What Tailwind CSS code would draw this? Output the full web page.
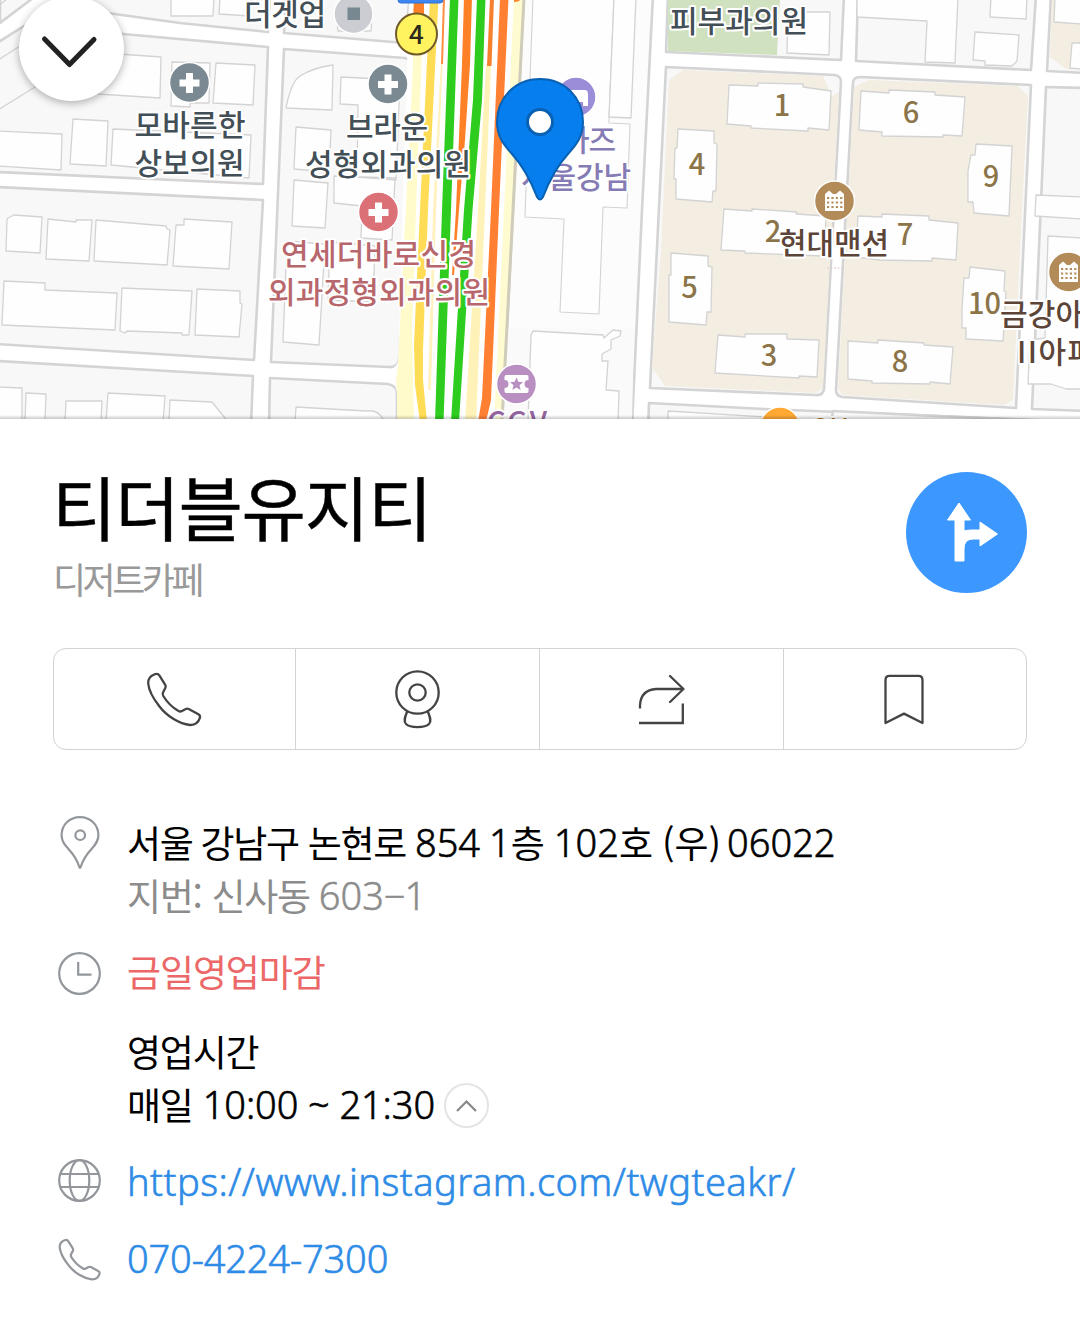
<!DOCTYPE html>
<html lang="ko">
<head>
<meta charset="utf-8">
<title>티더블유지티</title>
<script src="https://cdn.jsdelivr.net/npm/@tailwindcss/browser@4"></script>
</head>
<body class="bg-white w-[1080px] h-[1322px] overflow-hidden font-['Noto_Sans_CJK_KR',sans-serif] text-black">
<section class="relative h-[419px] overflow-hidden">
<svg class="block" width="1080" height="419" viewBox="0 0 1080 419" fill="none" stroke-linejoin="round">
  <rect width="1080" height="419" fill="#fff"/>
  <!-- city blocks -->
  <g fill="#f8f8f8" stroke="#d4d4d4" stroke-width="2.6">
    <path d="M33-2L0 23V-4Z"/>
    <path d="M50-6L100 12L180 23L268 32L270-5Z"/>
    <path d="M-3 43L24 26L60 29L123 34L268 47L263 184L-3 172Z"/>
    <path d="M-3 187L263 200L254 360L-3 344Z"/>
    <path d="M-3 361L253 376L251 425H-3Z"/>
    <path d="M286-5L284 33L405 43L410-5Z"/>
    <path d="M284 49L405 58Q413 60 413 68L399 359Q398 368 389 367L271 362Z"/>
    <path d="M270 378L388 384Q397 386 397 393V425H269Z"/>
    <path d="M524-5L502 425H632L642 210L653-5Z" fill="#fcfcfc"/>
    <path d="M668-5L666 52L841 60L844-5Z"/>
    <path d="M858-5L856 61L1031 70L1036-5Z"/>
    <path d="M1051-5L1047 71L1085 73V-5Z"/>
    <path d="M1046 87L1085 88V411L1032 409Z"/>
    <path d="M666 67L835 75Q841 76 841 82L824 389Q823 396 815 395L650 388Z"/>
    <path d="M860 77L1031 85L1016 408L842 397Q836 396 836 390L853 82Q854 77 860 77Z"/>
    <path d="M649 403L765 409L1085 422V430H648Z"/>
    <path d="M833 411L1085 423V430H830Z"/>
  </g>
  <path d="M506 328L634 329L632 419H503Z" fill="#fafafa"/>
  <path d="M668 0H780L777 55L668 51Z" fill="#d0e1c0"/>
  <path d="M683 70L823 76L832 96L839 92L823 388L815 393L665 386L652 367L661 250L669 80Z" fill="#f3ede2"/>
  <path d="M869 80L1018 86L1028 96L1021 230L1013 400L1004 405L842 395L838 388L854 87Z" fill="#f3ede2"/>
  <path d="M1052 0H1080V70L1066 69L1050 57Z" fill="#f3ede2"/>
  <!-- buildings -->
  <g fill="#fefefe" stroke="#d3d3d3" stroke-width="1.3">
    <path d="M-2 60L20 46L35 87L-2 110Z" fill="#f8f8f8"/>
    <path d="M-2 6L6 0"/>
    <path d="M171-3L171 16L213 16L214-3M220-3L219 14L250 16L252-3"/>
    <path d="M90 52L161 57L160 98L98 94ZM172 62L210 63L209 103L190 103L190 107L171 106ZM216 63L255 65L253 105L213 103Z"/>
    <path d="M73 119L108 121L106 166L70 164ZM-2 131L62 134L61 170L-2 166ZM113 129L251 135L249 178L111 165Z"/>
    <path d="M8 218L14 215L42 217L40 253L6 251L7 220ZM48 219L76 222V220L92 220L89 261L46 259ZM96 220L166 226L167 229L170 230L167 265L94 261ZM176 225L184 225V219L232 222L229 269L173 266Z"/>
    <path d="M4 281L45 283V290L117 293L115 330L2 325ZM122 288L192 291L189 335L182 335V333L127 331L125 333L120 331ZM197 289L240 291V303L242 304L239 337L195 335Z"/>
    <path d="M-2 387L22 388V422H-2ZM26 393L46 394L45 422H25ZM66 401H102L101 422H65ZM108 393L165 396L163 422H106ZM170 400L212 402L225 418V422H169Z"/>
    <path d="M333 65L332 110L286 108Q291 82 300 76Q315 67 333 65ZM341 77L400 80L396 180L357 177L358 105L340 104ZM296 127L331 130L329 172L294 169ZM294 180L328 183L325 228L292 226ZM334 176L395 178L392 240L361 238L362 206L334 203Z"/>
    <path d="M287 241L325 244L319 345L283 342ZM330 242L375 246L373 302L328 300Z"/>
    <path d="M338 31L336 11L372 13L371 31ZM296 407L366 411Q380 409 384 422H295Z"/>
    <path d="M533-3L525 217L564 219L560 312L599 314L603 207L627 208L630 124L609 123L609 118L614-3Z" stroke-width="1.1"/>
    <path d="M614-3L609 117L631 118L636-3Z"/>
    <path d="M533 331L603 335L604 338L613 330L621 331L620 336L611 340V349L602 354V361L608 361L606 390L619 391L618 422H528L531 335Z"/>
    <path d="M788 12L830 12L829 55L787 53Z"/>
    <path d="M857-3V17L927 21L925 62L955 63L958-3ZM991-3L990 17L1026 19L1027-3ZM975 32L1019 35L1017 61L1012 66L985 65V61L973 60Z"/>
    <path d="M1055-3L1054 22L1082 24V-3ZM1072 43L1070 68L1082 69V43Z"/>
    <path d="M729 85L758 86V83L803 84V87L831 91L829 130L808 128V131L751 128V126L727 124Z"/>
    <path d="M861 91L889 93V90L935 92V95L965 97L962 136L943 135V137L882 136V132L859 130Z"/>
    <path d="M678 129L714 131V143L717 144L716 191H713L712 202L676 199V179H674L675 148H677Z"/>
    <path d="M976 144L1012 146L1009 216L974 213L973 202L968 202V171L971 155H975Z"/>
    <path d="M724 209L752 211V209L797 212L796 214L826 216L824 256L745 253V251L721 250Z"/>
    <path d="M858 216L882 217V214L929 216V220L958 223L956 260L932 258V261L880 260L856 257Z"/>
    <path d="M671 253L708 256V266L712 267L711 312H707L706 325L669 322V275H671Z"/>
    <path d="M970 267L1005 271L1004 291L1006 292L1003 341L966 339V328H962V309L964 278H969Z"/>
    <path d="M718 335L745 337V334L787 334V339L819 340L817 377L799 376V378L715 373Z"/>
    <path d="M848 341L878 343V340L924 343V345L953 347L950 384L930 382V384L872 383V381L848 379Z"/>
    <path d="M1036 195L1082 197V219L1035 216ZM1048 236L1082 238V389L1066 389L1051 384L1028 384L1030 340L1045 338Z"/>
    <path d="M668 411L765 417L766 425H668Z"/>
  </g>
  <!-- main avenue -->
  <path d="M409-2L398 360Q398 367 390 369L397 392V422H502L524-2Z" fill="#fff"/>
  <path d="M413 50L422 50L416 210L412 330L414 422H397V392L396 380L398 366L413 67Z" fill="#fffbcb"/>
  <path d="M514-2H523L503 422H494Z" fill="#fffbd0"/>
  <path d="M524-2L502 422" stroke="#d0ccba" stroke-width="3"/>
  <path d="M441 60H443L436 210L431 390H428L433 210Z" fill="#fff2c0"/>
  <path d="M486 66H491L485 210L476 422H465L478 210Z" fill="#fff2b9"/>
  <path d="M430-2H438.500L428 210L423 350V380L427 422H420L415 385L414 345L420 210Z" fill="#ffdc55"/>
  <path d="M414-2H424V20H413Z" fill="#ff8127"/>
  <path d="M443-2H445L443 64H441Z" fill="#ff8d43"/>
  <path d="M464-2H472L470 64L465 140L459 210L454 275H452L456 210L462 64Z" fill="#ff8127"/>
  <path d="M490-2H494L491.500 66H487Z" fill="#f5802d"/>
  <path d="M514-2H522Q520 2 514 2Z" fill="#ff8127"/>
  <path d="M500-2H508.500L499 210L491 400L486 422H478L482 398L491 210Z" fill="#ff8033"/>
  <path d="M450-2H458.500L451 210L443.500 422H435L442 210Z" fill="#2ecc1f"/>
  <path d="M477-2H485.500L482 100L472.500 210L459 422H451L464 210L473 100Z" fill="#2ecc1f"/>
  <rect x="398" y="-5" width="45" height="8" rx="3" fill="#3f86f0" stroke="#2f72d2"/>
  <circle cx="416.500" cy="34" r="20.500" fill="#fff460" stroke="#705b2b" stroke-width="2"/>
  <!-- place markers -->
  <g stroke="#fff" stroke-width="1.500">
    <circle cx="189.500" cy="82.500" r="20" fill="#7b8a92"/>
    <circle cx="388" cy="84" r="20" fill="#7b8a92"/>
    <circle cx="378.500" cy="212" r="20" fill="#dc7077"/>
    <circle cx="353.500" cy="14" r="19.500" fill="#cbcdd2"/>
    <circle cx="576" cy="97" r="20" fill="#9c8dd8"/>
    <circle cx="516.500" cy="384" r="20" fill="#b98fc1"/>
    <circle cx="834.500" cy="201" r="20" fill="#b28b58"/>
    <circle cx="1068.500" cy="272" r="20" fill="#b28b58"/>
    <circle cx="780" cy="427" r="20" fill="#ffa834"/>
  </g>
  <path fill="#fff" d="M186 73h7v6.500h6.500v7H193V93h-7v-6.500h-6.500v-7H186ZM384.500 74.500h7v6.500h6.500v7h-6.500v6.500h-7V88H378v-7h6.500ZM375 202.500h7v6.500h6.500v7H382v6.500h-7V216h-6.500v-7h6.500Z"/>
  <rect x="347.500" y="7.500" width="12.500" height="12.500" fill="#778891"/>
  <path d="M566 92Q566 90 568 90H586Q588 91 588 94V106H583V102H566Z" fill="#fff"/>
  <path d="M506 375h21q1.500 0 1.500 2v3a4 4 0 0 0 0 8v3q0 2-1.500 2h-21q-1.500 0-1.500-2v-3a4 4 0 0 0 0-8v-3q0-2 1.500-2Z" fill="#fff"/>
  <path d="M516.500 377.500l1.900 4.300 4.600.5-3.500 3 1.100 4.600-4.100-2.500-4.100 2.500 1.100-4.600-3.500-3 4.600-.5Z" fill="#b98fc1"/>
  <g id="apartment">
    <path d="M825 194l4-3.500 4 3.500h3l4-3.500 4 3.500v17h-19Z" fill="#fff"/>
    <path d="M827 198h16M827 202.500h16M827 207h16" stroke="#b28b58" stroke-width="2.200" stroke-dasharray="2.200 2.200"/>
  </g>
  <use href="#apartment" x="234" y="71"/>
  <!-- map labels -->
  <g font-family="'Noto Sans CJK KR', sans-serif" font-weight="500" font-size="30" stroke="#fff" stroke-width="4" paint-order="stroke" fill="#434f56">
    <text x="244" y="24.500" textLength="82">더겟업</text>
    <text x="134.500" y="135.500" textLength="111">모바른한</text>
    <text x="134.500" y="173.500" textLength="110">상보의원</text>
    <text x="346" y="137.500" textLength="82">브라운</text>
    <text x="305" y="175" textLength="166">성형외과의원</text>
    <text x="670" y="32" textLength="138">피부과의원</text>
    <g fill="#b7666c">
      <text x="281" y="265" textLength="195">연세더바로신경</text>
      <text x="268" y="303" textLength="222">외과정형외과의원</text>
    </g>
    <g fill="#857bb5">
      <text x="562" y="151" textLength="54">아즈</text>
      <text x="521" y="188" textLength="110">서울강남</text>
    </g>
    <text x="487" y="433" fill="#94649f" font-size="29" textLength="60">CGV</text>
    <text x="810" y="438" fill="#b5722b" font-size="27" textLength="39">CU</text>
    <g fill="#8b7448" text-anchor="middle" font-size="29" stroke-width="3">
      <text x="782" y="116">1</text><text x="911" y="122.500">6</text><text x="697" y="175">4</text><text x="991" y="186.500">9</text>
      <text x="773" y="242">2</text><text x="905" y="244.500">7</text><text x="689.500" y="298">5</text><text x="984.500" y="314">10</text>
      <text x="769" y="366">3</text><text x="900" y="372">8</text>
    </g>
    <g fill="#5c4538">
      <text x="779" y="253.500" textLength="110">현대맨션</text>
      <text x="1000" y="325" textLength="111">금강아파</text>
      <text x="1017" y="363" textLength="78">II아파</text>
    </g>
    <text x="416.500" y="43.500" text-anchor="middle" font-size="26" fill="#2c291c" stroke="none">4</text>
  </g>
  <path d="M827 268H842" stroke="#e1c9c4" stroke-dasharray="2 1.500"/>
  <!-- selected place pin -->
  <path d="M540 79C515 79 497 98 497 122C497 136 503 144 512 154C524 167 532 184 537 197Q540 202 543 197C548 184 556 167 568 154C577 144 583 136 583 122C583 98 565 79 540 79Z" fill="#067eed" stroke="#0961b4" stroke-width="2"/>
  <circle cx="540" cy="122" r="12.500" fill="#fff" stroke="#0961b4" stroke-width="3"/>
</svg>
<button class="absolute left-[19px] top-[-4px] size-[105px] rounded-full bg-white shadow-[0_2px_9px_rgba(0,0,0,0.32)]" aria-label="닫기">
  <svg width="105" height="105" fill="none" stroke="#222" stroke-width="5" stroke-linecap="round" stroke-linejoin="round"><path d="M25.500 43L50.500 68.500L75 43.500"/></svg>
</button>
<div class="absolute inset-x-0 bottom-0 h-[4px] bg-linear-to-b from-black/0 to-black/20"></div>
</section>

<main class="px-[53px]">
  <header class="flex h-[174px] justify-between pt-[53px]">
    <div>
      <h1 class="-mt-[18px] h-[104px] text-[70px] leading-[104px] tracking-[-1.200px] -ml-[1px] whitespace-nowrap [-webkit-text-stroke:0.4px]">티더블유지티</h1>
      <p class="-mt-[5px] h-[50px] text-[36px] leading-[50px] tracking-[-3.5px] text-[#999] whitespace-nowrap">디저트카페</p>
    </div>
    <button class="size-[121px] rounded-full bg-[#3c98ff]" aria-label="길찾기">
      <svg width="121" height="121" fill="#fff" stroke="#fff" stroke-linejoin="round"><path d="M53 31L64.500 48H58V59Q61 58 66 58H74V50L91.500 62L74 74V67H67Q58 67 58 77V89H49V48H41.500Z"/></svg>
    </button>
  </header>

  <nav class="mt-[55px] flex h-[102px] rounded-[13px] border border-[#d3d3d3] divide-x divide-[#d3d3d3] text-[#444]">
    <button class="w-[242px] shrink-0 flex items-center justify-center" aria-label="전화">
      <svg class="block ml-[3px] mt-[2px]" width="60" height="60" viewBox="0 0 60 60" fill="none" stroke="currentColor" stroke-width="2.300" stroke-linejoin="round"><g id="handset"><path d="M8.500 4.300C11.200 3.200 12.300 3.700 13.500 5.600L19.400 15.200Q20.100 16.500 19.300 18L17 22.500Q16.200 24.300 17.300 26Q23 35.500 32.500 41Q34.200 42 36 41L39.800 39Q41.200 38.300 42.700 39L52.400 44.300Q54.700 45.700 53.800 48.200C52 53.500 49 55.200 44 55C33.500 54 21 46.500 13.300 36.300C6.500 27.500 2.800 20.500 2.200 13.500C1.900 9 4.500 5.800 8.500 4.300Z"/></g></svg>
    </button>
    <button class="w-[244px] shrink-0 flex items-center justify-center" aria-label="거리뷰">
      <svg class="block" width="60" height="60" viewBox="0 0 60 60" fill="none" stroke="currentColor" stroke-width="2.300"><circle cx="29.500" cy="23.500" r="21.200"/><circle cx="29.500" cy="23.500" r="8.200"/><path d="M19.300 42.300C16.500 49 15.500 52.500 18 55C22 59.100 37 59.100 41 55C43.500 52.500 42.500 49 39.700 42.300"/></svg>
    </button>
    <button class="w-[244px] shrink-0 flex items-center justify-center" aria-label="공유">
      <svg class="block" width="60" height="60" viewBox="0 0 60 60" fill="none" stroke="currentColor" stroke-width="2.300" stroke-linejoin="round"><path d="M8 39.500V36Q9 21 24 20H51"/><path d="M38 7L51.500 20L38 33" stroke-linecap="round"/><path d="M7 54H50.800V34.500" stroke-linejoin="miter"/></svg>
    </button>
    <button class="flex-1 flex items-center justify-center" aria-label="저장">
      <svg class="block" width="60" height="60" viewBox="0 0 60 60" fill="none" stroke="currentColor" stroke-width="2.300" stroke-linejoin="round"><path d="M10.500 54V11Q10.500 6.800 14.500 6.800H43.500Q47.500 6.800 47.500 11V54L29 44.600Z"/></svg>
    </button>
  </nav>

  <div class="pt-[67px] flex flex-col gap-6 text-[37px] leading-[53px] whitespace-nowrap">
    <div class="flex">
      <svg class="w-[74px] h-[53px] shrink-0 overflow-visible" viewBox="0 0 74 53" fill="none" stroke="#93979b" stroke-width="2.200"><path d="M27 .1C16.500 .1 8.600 8 8.600 18.200C8.600 24 11.500 27.500 15.500 32C21 38 24.500 44 26.300 50Q27 52 27.700 50C29.500 44 33 38 38.500 32C42.500 27.500 45.400 24 45.400 18.200C45.400 8 37.500 .1 27 .1Z"/><circle cx="27.200" cy="18.200" r="4.800"/></svg>
      <div class="-mt-[1.5px] mb-[1.5px]">
        <p class="flex"><span class="tracking-[-1.300px]">서울</span><span class="ml-[8px] tracking-[-1.300px]">강남구</span><span class="ml-[9px] tracking-[-1.300px]">논현로</span><span class="ml-[9px] font-['Noto_Sans'] font-light text-[38px] [-webkit-text-stroke:0.6px]">854</span><span class="ml-[9px] font-['Noto_Sans'] font-light text-[38px] [-webkit-text-stroke:0.6px]">1</span><span>층</span><span class="ml-[9px] font-['Noto_Sans'] font-light text-[38px] [-webkit-text-stroke:0.6px]">102</span><span>호</span><span class="ml-[9px]">(우)</span><span class="ml-[6px] font-['Noto_Sans'] font-light text-[38px] [-webkit-text-stroke:0.6px]">06022</span></p>
        <p class="flex text-[#8c8c8c]"><span class="tracking-[-1.300px]">지번:</span><span class="ml-[10px] tracking-[-1.300px]">신사동</span><span class="ml-[9px] font-['Noto_Sans'] font-light text-[38px] [-webkit-text-stroke:0.5px]">603</span><span class="font-['Noto_Sans'] font-light text-[38px] [-webkit-text-stroke:0.5px]">−</span><span class="-ml-px font-['Noto_Sans'] font-light text-[38px] [-webkit-text-stroke:0.5px]">1</span></p>
      </div>
    </div>
    <div class="flex text-[#ec6868]">
      <svg class="w-[74px] h-[53px] shrink-0" viewBox="0 0 74 53" fill="none" stroke="#93979b" stroke-width="2.200"><circle cx="26.500" cy="26.500" r="20.300"/><path d="M25.200 15V27.600H38.500"/></svg>
      <p class="-mt-[2px] tracking-[-1.100px]">금일영업마감</p>
    </div>
    <div class="pl-[74px] pt-[2px]">
      <p class="-mt-px mb-px tracking-[-1.200px]">영업시간</p>
      <p class="flex items-center"><span class="-mt-[2px] tracking-[-1.200px]">매일</span><span class="-mt-px ml-[10px] font-['Noto_Sans'] font-light text-[38px] tracking-[-0.1px] [-webkit-text-stroke:0.6px]">10:00 ~ 21:30</span><button class="ml-[9px] size-[45px] rounded-full border-2 border-[#e4e4e4]" aria-label="접기"><svg class="block" width="41" height="41" fill="none" stroke="#888" stroke-width="2.200"><path d="M11 26L20.500 16.500L30 26"/></svg></button></p>
    </div>
    <div class="flex text-[#2e8be6]">
      <svg class="w-[74px] h-[53px] shrink-0" viewBox="0 0 74 53" fill="none" stroke="#93979b" stroke-width="2.200"><circle cx="26.500" cy="25.500" r="20.300"/><ellipse cx="26.500" cy="25.500" rx="9.800" ry="20.300"/><path d="M7.500 19H45.500M7.500 32H45.500"/></svg>
      <a class="font-['Noto_Sans'] font-light text-[38px] tracking-[0.47px] [-webkit-text-stroke:0.6px]">https://www.instagram.com/twgteakr/</a>
    </div>
    <div class="flex text-[#2e8be6]">
      <svg class="w-[74px] h-[53px] shrink-0" viewBox="0 0 74 53" fill="none" stroke="#93979b" stroke-width="2.900" stroke-linejoin="round"><use href="#handset" transform="translate(5 5) scale(.77)"/></svg>
      <a class="font-['Noto_Sans'] font-light text-[38px] tracking-[-0.15px] [-webkit-text-stroke:0.6px]">070-4224-7300</a>
    </div>
  </div>
</main>
</body>
</html>
